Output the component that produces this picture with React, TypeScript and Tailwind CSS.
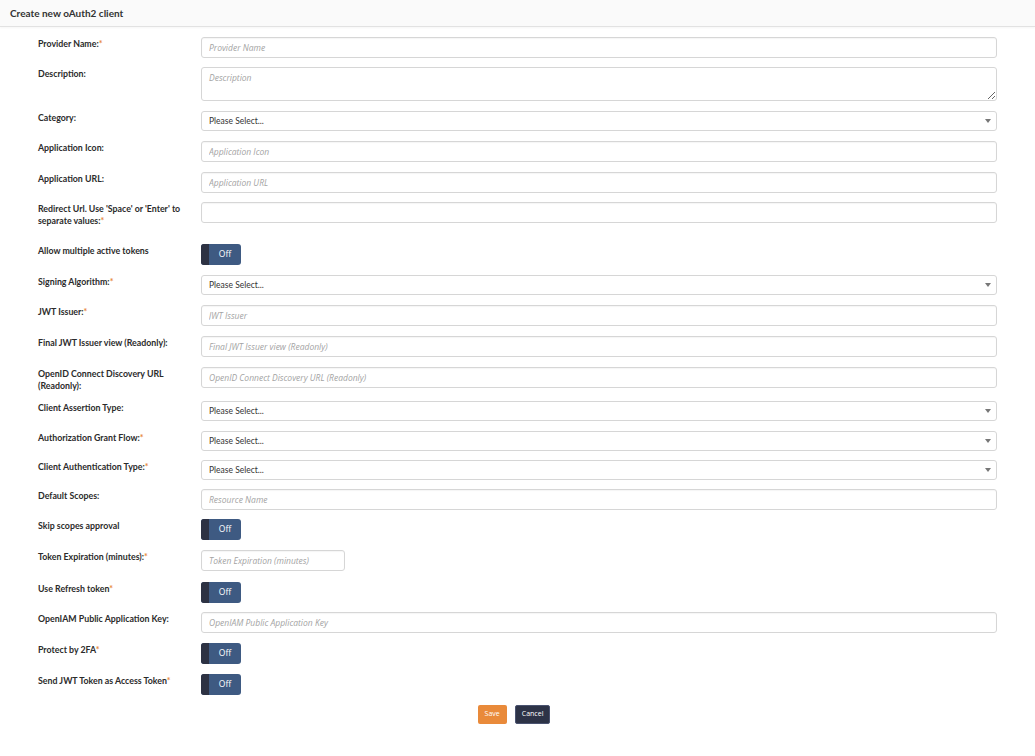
import { useState } from "react";

type Row =
  | { kind: "input"; label: string; req?: boolean; ph: string; h: string; narrow?: boolean }
  | { kind: "textarea"; label: string; req?: boolean; ph: string; h: string }
  | { kind: "select"; label: string; req?: boolean; h: string }
  | { kind: "toggle"; label: string; req?: boolean; h: string };

const rows: Row[] = [
  { kind: "input", label: "Provider Name:", req: true, ph: "Provider Name", h: "h-[30px]" },
  { kind: "textarea", label: "Description:", ph: "Description", h: "h-[44px]" },
  { kind: "select", label: "Category:", h: "h-[30px]" },
  { kind: "input", label: "Application Icon:", ph: "Application Icon", h: "h-[31px]" },
  { kind: "input", label: "Application URL:", ph: "Application URL", h: "h-[30px]" },
  { kind: "input", label: "Redirect Url. Use 'Space' or 'Enter' to separate values:", req: true, ph: "", h: "h-[42px]" },
  { kind: "toggle", label: "Allow multiple active tokens", h: "h-[31px]" },
  { kind: "select", label: "Signing Algorithm:", req: true, h: "h-[30px]" },
  { kind: "input", label: "JWT Issuer:", req: true, ph: "JWT Issuer", h: "h-[31px]" },
  { kind: "input", label: "Final JWT Issuer view (Readonly):", ph: "Final JWT Issuer view (Readonly)", h: "h-[31px]" },
  { kind: "input", label: "OpenID Connect Discovery URL (Readonly):", ph: "OpenID Connect Discovery URL (Readonly)", h: "h-[34px]" },
  { kind: "select", label: "Client Assertion Type:", h: "h-[30px]" },
  { kind: "select", label: "Authorization Grant Flow:", req: true, h: "h-[29px]" },
  { kind: "select", label: "Client Authentication Type:", req: true, h: "h-[29px]" },
  { kind: "input", label: "Default Scopes:", ph: "Resource Name", h: "h-[30px]" },
  { kind: "toggle", label: "Skip scopes approval", h: "h-[31px]" },
  { kind: "input", label: "Token Expiration (minutes):", req: true, ph: "Token Expiration (minutes)", h: "h-[32px]", narrow: true },
  { kind: "toggle", label: "Use Refresh token", req: true, h: "h-[30px]" },
  { kind: "input", label: "OpenIAM Public Application Key:", ph: "OpenIAM Public Application Key", h: "h-[31px]" },
  { kind: "toggle", label: "Protect by 2FA", req: true, h: "h-[31px]" },
  { kind: "toggle", label: "Send JWT Token as Access Token", req: true, h: "h-[31px]" },
];

const inputCls =
  "block h-[21px] rounded-[3px] border border-[#d6d6d6] bg-white px-[7px] font-['Open_Sans',sans-serif] text-[8.5px] italic text-[#555] outline-none placeholder:text-[#a3a3a3] shadow-[inset_0_1px_1px_rgba(0,0,0,0.04)]";

function Toggle() {
  const [on, setOn] = useState(false);
  return (
    <button
      type="button"
      onClick={() => setOn((o) => !o)}
      className="flex h-[21px] w-[40px] overflow-hidden rounded-[3px] bg-[#3e5a82]"
    >
      <span className="h-full w-[8px] bg-[#2d3243]" />
      <span className="flex h-full flex-1 items-center justify-center font-['Open_Sans',sans-serif] text-[8.5px] text-white">
        {on ? "On" : "Off"}
      </span>
    </button>
  );
}

export default function App() {
  return (
    <div className="min-h-screen bg-white font-['Lato','Open_Sans',sans-serif] text-[#333]">
      <div className="flex h-[27px] items-center border-b border-[#e2e2e2] bg-[#fafafa] px-[10px] shadow-[0_1px_2px_rgba(0,0,0,0.04)]">
        <h1 className="text-[10px] font-bold text-[#333]">Create new oAuth2 client</h1>
      </div>

      <form className="px-[38px] pt-[10px]" onSubmit={(e) => e.preventDefault()}>
        {rows.map((r) => (
          <div key={r.label} className={`flex ${r.h}`}>
            <label className="w-[163px] shrink-0 pr-[14px] pt-[1px] text-[8.8px] font-bold leading-[12px] text-[#2b2b2b]">
              {r.label}
              {r.req && <span className="text-[#e8883a]">*</span>}
            </label>
            <div className="flex-1">
              {r.kind === "input" && (
                <input
                  placeholder={r.ph}
                  className={`${inputCls} ${r.narrow ? "w-[144px]" : "w-full"}`}
                />
              )}
              {r.kind === "textarea" && (
                <textarea
                  placeholder={r.ph}
                  className="block h-[34px] w-full resize-y rounded-[3px] border border-[#d6d6d6] bg-white px-[7px] py-[4px] font-['Open_Sans',sans-serif] text-[8.5px] italic text-[#555] outline-none placeholder:text-[#a3a3a3]"
                />
              )}
              {r.kind === "select" && (
                <div className="flex h-[20px] w-full items-center justify-between rounded-[3px] border border-[#d6d6d6] bg-white pl-[7px] pr-[5px] text-[8.5px] text-[#333]">
                  <span>Please Select...</span>
                  <svg width="6" height="4" viewBox="0 0 6 4">
                    <path d="M0 0h6L3 4z" fill="#777" />
                  </svg>
                </div>
              )}
              {r.kind === "toggle" && <Toggle />}
            </div>
          </div>
        ))}

        <div className="flex justify-center gap-[8px] pr-[7px]">
          <button className="h-[19px] rounded-[2px] bg-[#e98a3a] px-[7px] font-['Open_Sans',sans-serif] text-[7px] text-white">
            Save
          </button>
          <button className="h-[19px] rounded-[2px] border border-[#4a5370] bg-[#2d3347] px-[6px] font-['Open_Sans',sans-serif] text-[7px] text-white">
            Cancel
          </button>
        </div>
      </form>
    </div>
  );
}
